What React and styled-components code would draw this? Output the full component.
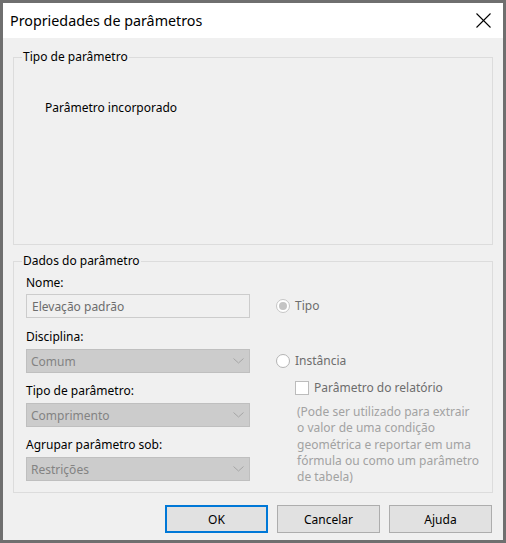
import React from 'react';
import styled, { createGlobalStyle } from 'styled-components';

const GlobalStyle = createGlobalStyle`
    html, body {
        margin: 0;
        padding: 0;
        background: #ffffff;
    }
    * {
        box-sizing: border-box;
    }
`;

const Window = styled.div`
    width: 506px;
    height: 543px;
    border: 3px solid #6f6f6f;
    background: #f0f0f0;
    font-family: 'Noto Sans', 'Open Sans', sans-serif;
    font-size: 12px;
    color: #000000;
    display: flex;
    flex-direction: column;
`;

const TitleBar = styled.div`
    height: 35px;
    background: #ffffff;
    display: flex;
    align-items: center;
    justify-content: space-between;
    padding: 0 12px 1px 7px;
`;

const Title = styled.div`
    font-size: 14.3px;
`;

const CloseButton = styled.button`
    border: none;
    background: transparent;
    padding: 0;
    width: 16px;
    height: 16px;
    display: flex;
    align-items: center;
    justify-content: center;
`;

const Body = styled.div`
    flex: 1;
    display: flex;
    flex-direction: column;
    padding: 11px 10px 7px 10px;
`;

const GroupBox = styled.fieldset`
    margin: 0 0 ${props => props.$after}px 0;
    height: ${props => props.$height}px;
    border: 1px solid #dcdcdc;
    border-radius: 0;
    padding: ${props => props.$top}px 8px 0 8px;
    min-width: 0;
`;

const Legend = styled.legend`
    padding: 0 1px;
    line-height: 16px;
    font-size: 12px;
`;

const StaticText = styled.div`
    line-height: 16px;
    padding-left: 23px;
`;

const DataGrid = styled.div`
    display: flex;
    gap: 26px;
    padding: 0 4px;
`;

const LeftColumn = styled.div`
    width: 224px;
    flex-shrink: 0;
    display: flex;
    flex-direction: column;
    gap: 10px;
`;

const Field = styled.div`
    display: flex;
    flex-direction: column;
    gap: ${props => props.$gap}px;
    margin-bottom: ${props => props.$after || 0}px;
`;

const Label = styled.label`
    line-height: 16px;
`;

const TextInput = styled.div`
    height: 24px;
    border: 1px solid #cccccc;
    background: #f0f0f0;
    color: #6d6d6d;
    padding: 0 5px;
    display: flex;
    align-items: center;
`;

const Select = styled.div`
    height: 24px;
    border: 1px solid #bfbfbf;
    background: #cccccc;
    color: #838383;
    padding: 0 5px 0 4px;
    display: flex;
    align-items: center;
    justify-content: space-between;
`;

const RightColumn = styled.div`
    flex: 1;
    min-width: 0;
    display: flex;
    flex-direction: column;
    padding-top: 23px;
`;

const OptionRow = styled.div`
    display: flex;
    align-items: center;
    gap: 5px;
    line-height: 16px;
    height: 16px;
    color: #6d6d6d;
    margin-top: ${props => props.$top || 0}px;
    padding-left: ${props => props.$indent || 0}px;
`;

const Radio = styled.span`
    width: 14px;
    height: 14px;
    border-radius: 50%;
    border: 1px solid ${props => (props.$checked ? '#c6c6c6' : '#b4b4b4')};
    background: #ffffff;
    display: flex;
    align-items: center;
    justify-content: center;

    &::after {
        content: '';
        width: 8px;
        height: 8px;
        border-radius: 50%;
        background: ${props => (props.$checked ? '#c4c4c4' : 'transparent')};
    }
`;

const Checkbox = styled.span`
    width: 14px;
    height: 14px;
    border: 1px solid #bcbcbc;
    background: #ffffff;
`;

const Note = styled.div`
    margin-top: 8px;
    margin-left: 21px;
    width: 182px;
    color: #a2a2a2;
    line-height: 16.3px;
`;

const ButtonRow = styled.div`
    display: flex;
    justify-content: flex-end;
    gap: 9px;
    padding-right: 1px;
`;

const Button = styled.button`
    width: 103px;
    height: 28px;
    background: #e1e1e1;
    border: ${props => (props.$default ? '2px solid #0078d7' : '1px solid #adadad')};
    font-family: inherit;
    font-size: 12px;
    color: #000000;
    padding: 0;
`;

const Chevron = () => (
    <svg width="11" height="6" viewBox="0 0 11 6">
        <polyline points="0.5,0.5 5.5,5 10.5,0.5" fill="none" stroke="#a6a6a6" strokeWidth="1" />
    </svg>
);

const CloseIcon = () => (
    <svg width="15" height="15" viewBox="0 0 15 15">
        <line x1="0.5" y1="0.5" x2="14.5" y2="14.5" stroke="#000" strokeWidth="1.1" />
        <line x1="14.5" y1="0.5" x2="0.5" y2="14.5" stroke="#000" strokeWidth="1.1" />
    </svg>
);

const selects = [
    { label: 'Disciplina:', value: 'Comum' },
    { label: 'Tipo de parâmetro:', value: 'Comprimento' },
    { label: 'Agrupar parâmetro sob:', value: 'Restrições' },
];

export default function App() {
    return (
        <>
            <GlobalStyle />
            <Window>
                <TitleBar>
                    <Title>Propriedades de parâmetros</Title>
                    <CloseButton aria-label="Fechar">
                        <CloseIcon />
                    </CloseButton>
                </TitleBar>
                <Body>
                    <GroupBox $height={196} $after={8} $top={35}>
                        <Legend>Tipo de parâmetro</Legend>
                        <StaticText>Parâmetro incorporado</StaticText>
                    </GroupBox>
                    <GroupBox $height={240} $after={12} $top={6}>
                        <Legend>Dados do parâmetro</Legend>
                        <DataGrid>
                            <LeftColumn>
                                <Field $gap={3} $after={1}>
                                    <Label>Nome:</Label>
                                    <TextInput>Elevação padrão</TextInput>
                                </Field>
                                {selects.map(s => (
                                    <Field key={s.label} $gap={4}>
                                        <Label>{s.label}</Label>
                                        <Select>
                                            <span>{s.value}</span>
                                            <Chevron />
                                        </Select>
                                    </Field>
                                ))}
                            </LeftColumn>
                            <RightColumn>
                                <OptionRow>
                                    <Radio $checked />
                                    Tipo
                                </OptionRow>
                                <OptionRow $top={39}>
                                    <Radio />
                                    Instância
                                </OptionRow>
                                <OptionRow $top={11} $indent={19}>
                                    <Checkbox />
                                    Parâmetro do relatório
                                </OptionRow>
                                <Note>
                                    (Pode ser utilizado para extrair o valor de uma condição
                                    geométrica e reportar em uma fórmula ou como um parâmetro de
                                    tabela)
                                </Note>
                            </RightColumn>
                        </DataGrid>
                    </GroupBox>
                    <ButtonRow>
                        <Button $default>OK</Button>
                        <Button>Cancelar</Button>
                        <Button>Ajuda</Button>
                    </ButtonRow>
                </Body>
            </Window>
        </>
    );
}
